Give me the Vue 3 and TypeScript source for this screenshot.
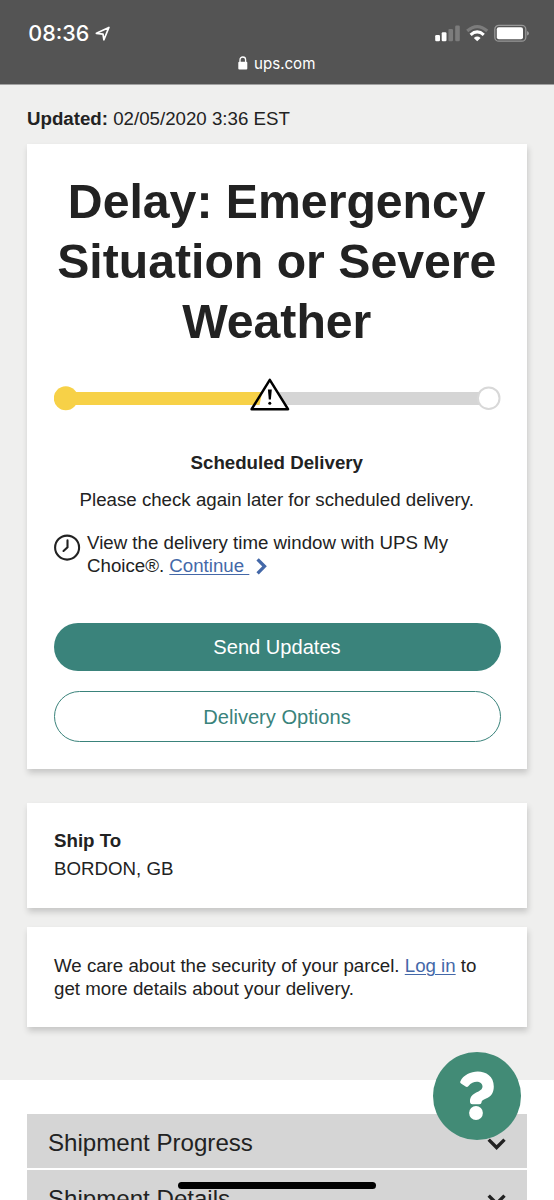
<script setup lang="ts">
const sections: string[] = ['Shipment Progress', 'Shipment Details']
const headline: string[] = ['Delay: Emergency', 'Situation or Severe', 'Weather']
</script>

<template>
  <div class="screen">
    <header class="browser">
      <div class="status">
        <span class="time">08:36</span>
        <svg class="location" width="16" height="16" viewBox="0 0 16 16">
          <path d="M1.4 7.3 13.9 1.4 8.9 13.8 8 8.1Z" />
        </svg>
        <svg class="signals" width="96" height="20" viewBox="0 0 96 20">
          <g fill="#fff">
            <rect x="2.2" y="11" width="4.8" height="6.2" rx="1.2" />
            <rect x="8.7" y="8.2" width="4.8" height="9" rx="1.2" />
          </g>
          <g fill="#7c7c7c">
            <rect x="15.4" y="4.9" width="4.6" height="12.3" rx="1.2" />
            <rect x="22.2" y="1.6" width="4.6" height="15.6" rx="1.2" />
          </g>
          <g fill="none" stroke-width="3.1">
            <path d="M34.2 7Q44.2-1.9 54.2 7" stroke="#7c7c7c" />
            <path d="M37.6 10.8Q44.2 5 50.8 10.8" stroke="#fff" />
          </g>
          <path d="M40.8 13.9Q44.2 11.3 47.6 13.9L44.2 17.3Z" fill="#fff" />
          <rect x="61.8" y="1.4" width="31" height="15.8" rx="4" fill="none" stroke="#979797" stroke-width="1.3" />
          <rect x="63.8" y="3.3" width="26.2" height="12" rx="2" fill="#fff" />
          <path d="M94 7Q96 7.7 96 9.3Q96 10.9 94 11.6Z" fill="#979797" />
        </svg>
      </div>
      <div class="address">
        <svg width="10" height="15" viewBox="0 0 10 15">
          <rect x=".3" y="5.7" width="9" height="7.8" rx="1" fill="#fff" />
          <path d="M2 6.2V3.8a2.8 2.8 0 0 1 5.6 0v2.4" fill="none" stroke="#fff" stroke-width="1.3" />
        </svg>
        <span>ups.com</span>
      </div>
    </header>

    <main class="tracking">
      <p class="updated"><b>Updated:</b> 02/05/2020 3:36 EST</p>

      <section class="card status-card">
        <h1><span v-for="line in headline" :key="line">{{ line }}</span></h1>
        <svg class="progress" width="447" height="40" viewBox="0 0 447 40">
          <rect x="212" y="14" width="215" height="13" fill="#d5d5d5" />
          <rect x="12" y="14" width="200" height="13" fill="#f7d147" />
          <circle cx="11.8" cy="20.2" r="12" fill="#f7d147" />
          <circle cx="434.7" cy="20.2" r="10.8" fill="#fff" stroke="#d8d8d8" stroke-width="2" />
          <path d="M215.8 1.8 234 31.2H197.6Z" fill="#fff" />
          <path d="M199.5 27 208.3 14 205.5 27Z" fill="#f7d147" />
          <path d="M215.8 1.8 234 31.2H197.6Z" fill="none" stroke="#000" stroke-width="2.5" stroke-linejoin="round" />
          <path d="M213.9 11.5h3.9l-.9 10h-2.1Z" />
          <circle cx="215.8" cy="25.3" r="1.5" />
        </svg>
        <h2>Scheduled Delivery</h2>
        <p class="check">Please check again later for scheduled delivery.</p>
        <div class="choice">
          <svg width="27" height="28" viewBox="0 0 27 28">
            <g fill="none" stroke="#222" stroke-linecap="round">
              <circle cx="13.1" cy="13.6" r="12" stroke-width="2.1" />
              <path d="M13.5 6.4V13.3L9.5 17" stroke-width="2.1" />
            </g>
          </svg>
          <p>
            View the delivery time window with UPS My<br />Choice®.
            <a>Continue&nbsp;</a>
            <svg class="go" width="11" height="17" viewBox="0 0 11 17">
              <path d="m1.6 1.3 6.9 7-6.9 7" fill="none" stroke="#4468a8" stroke-width="3.3" />
            </svg>
          </p>
        </div>
        <button class="primary">Send Updates</button>
        <button class="secondary">Delivery Options</button>
      </section>

      <section class="card ship-card">
        <h3>Ship To</h3>
        <p>BORDON, GB</p>
      </section>

      <section class="card login-card">
        <p>We care about the security of your parcel. <a>Log in</a> to<br />get more details about your delivery.</p>
      </section>
    </main>

    <div class="sections">
      <div v-for="name in sections" :key="name" class="section">
        <span>{{ name }}</span>
        <svg width="20" height="13" viewBox="0 0 20 13">
          <path d="m1.7 1.6 7.9 7.9 7.9-7.9" fill="none" stroke="#222" stroke-width="3.4" />
        </svg>
      </div>
    </div>

    <div class="help">
      <svg width="87" height="88" viewBox="0 0 87 88">
        <path d="M27.3 29.4C34 15.5 60.8 15.5 60.8 34.5C60.8 48 49 45.5 48.6 50.2Q48.4 52.2 46.4 52.2H39.4Q37 52.2 37 49.5C37 39.5 49.5 41 49.5 34.6C49.5 29 40.5 27.8 35.5 34Q34.2 35.6 32.6 34.6L28 31.4Q26.7 30.5 27.3 29.4Z" fill="#fff" />
        <circle cx="43" cy="61" r="6.9" fill="#fff" />
      </svg>
    </div>
    <div class="home-bar"></div>
  </div>
</template>

<style>
body {
  margin: 0;
  background: #fff;
}
</style>

<style scoped>
.screen {
  position: relative;
  width: 554px;
  height: 1200px;
  overflow: hidden;
  background: #fff;
  color: #222;
  font: 18.7px/23px "Liberation Sans", Arial, sans-serif;
  white-space: nowrap;
}
p, h1, h2, h3 { margin: 0; }
a { color: #4468a8; text-decoration: underline; text-decoration-thickness: 1px; text-underline-offset: 2px; }
.browser {
  box-sizing: border-box;
  height: 85px;
  background: #545454;
  border-bottom: 1px solid #a2a2a2;
  color: #fff;
  font-family: Inter, sans-serif;
}
.status {
  display: flex;
  align-items: flex-start;
  padding: 21px 25px 0 28.3px;
  height: 31px;
}
.time { font-size: 21.5px; font-weight: 500; line-height: 25px; }
.location { margin: 4.5px 0 0 5.5px; fill: none; stroke: #fff; stroke-width: 1.7; stroke-linejoin: round; }
.signals { margin: 3.4px 0 0 auto; }
.address { display: flex; align-items: center; gap: 6px; height: 23px; padding-left: 238px; font-size: 15.1px; line-height: 23px; }
.tracking {
  box-sizing: border-box;
  height: 995px;
  padding: 22px 27px 0;
  background: #efefee;
}
.updated { height: 37px; }
.card {
  box-sizing: border-box;
  background: #fff;
  box-shadow: 1px 4px 6px rgba(0, 0, 0, 0.17);
}
.status-card {
  display: flex;
  flex-direction: column;
  height: 625px;
  padding: 27px 27px 0 26.5px;
  text-align: center;
}
h1 { display: flex; flex-direction: column; align-items: center; font-size: 48.2px; line-height: 60px; }
h1 span { display: block; }
.progress { margin-top: 27px; flex: none; }
h2, h3 { font-size: 18.7px; line-height: 23px; }
h2 { margin-top: 33px; }
.check { margin-top: 14px; }
.choice { display: flex; gap: 6.5px; margin-top: 20px; text-align: left; }
.choice > svg { margin-top: 3px; }
.go { margin-left: 7px; vertical-align: -2.5px; }
button { width: 447px; height: 48px; padding: 0; border: 0; border-radius: 26px; font: 20.1px/24px "Liberation Sans", Arial, sans-serif; }
.primary { margin-top: 46.3px; background: #3a837b; color: #fff; }
.primary { padding-bottom: 1px; }
.secondary { height: 51px; margin-top: 20px; background: #fff; border: 1.5px solid #3a837b; color: #3a837b; }
.ship-card { height: 105px; margin-top: 34px; padding: 26px 27px; }
.ship-card p { margin-top: 5px; }
.login-card { height: 100px; margin-top: 19px; padding: 27px; }
.sections { display: flex; flex-direction: column; gap: 2px; padding: 34px 27px 0; }
.section {
  display: flex;
  align-items: center;
  justify-content: space-between;
  height: 54px;
  padding: 0 20px 0 21px;
  background: #d5d5d5;
  font-size: 24.1px;
  line-height: 30px;
}
.section span { padding-top: 3px; }
.section svg { margin-top: 6px; }
.help { position: absolute; left: 433px; top: 1052px; width: 88px; height: 88px; border-radius: 50%; background: #428b76; }
.home-bar { position: absolute; left: 178px; top: 1182px; width: 198px; height: 7px; border-radius: 4px; background: #000; }
</style>
